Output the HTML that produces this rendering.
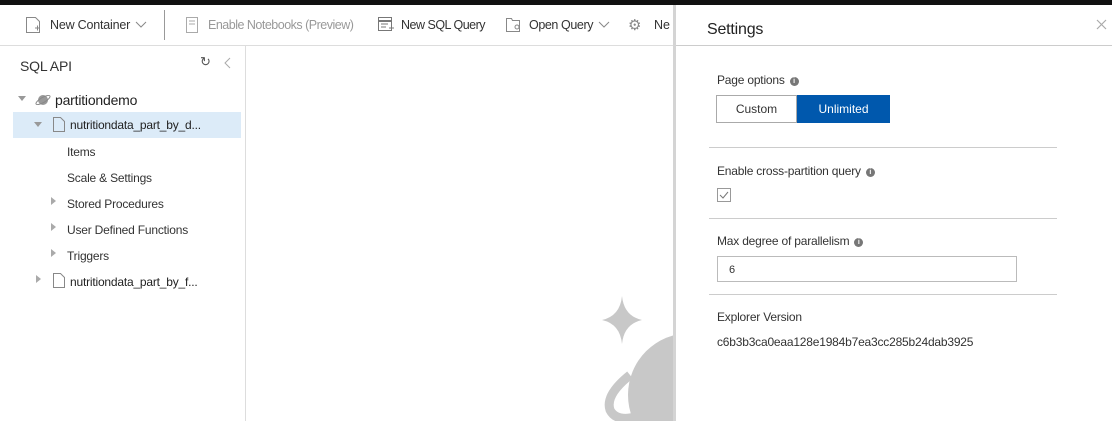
<!DOCTYPE html>
<html><head><style>
*{margin:0;padding:0;box-sizing:border-box}
body{width:1112px;height:421px;overflow:hidden;background:#fff;font-family:"Liberation Sans",sans-serif;font-size:12px;color:#333;position:relative}
.a{position:absolute;white-space:nowrap}
.s{letter-spacing:-0.2px}
.info{display:inline-block;width:9px;height:9px;border-radius:50%;background:#777;color:#fff;font-size:7px;text-align:center;line-height:9px;font-weight:bold;vertical-align:1px;margin-left:5px;letter-spacing:0}
.hl{position:absolute;height:1px;background:#ccc}
.tri{position:absolute;width:0;height:0}
</style></head><body>
<div class="a" style="left:0;top:0;width:1112px;height:5px;background:#111"></div>
<div class="hl" style="left:0;top:45px;width:675px;background:#ddd"></div>
<div class="a" style="left:164px;top:10px;width:1px;height:30px;background:#999"></div>
<!-- toolbar -->
<svg class="a" style="left:25px;top:16px" width="16" height="18"><path d="M1.5 1.5h9l4 4v11h-13z" fill="none" stroke="#888"/><path d="M10 12h5M12.5 9.5v5" stroke="#888"/></svg>
<div class="a s" style="left:50px;top:18px;font-size:12.5px;color:#333">New Container</div>
<svg class="a" style="left:135px;top:21px" width="12" height="8"><path d="M1 1l5 5 5-5" fill="none" stroke="#888"/></svg>
<svg class="a" style="left:185px;top:16px" width="14" height="18"><rect x="1.5" y="1.5" width="11" height="15" fill="none" stroke="#aaa"/><path d="M4 5h6M4 8h6" stroke="#aaa"/></svg>
<div class="a s" style="left:208px;top:18px;font-size:12.5px;color:#999;letter-spacing:-0.5px">Enable Notebooks (Preview)</div>
<svg class="a" style="left:377px;top:16px" width="17" height="17"><rect x="1.5" y="1.5" width="13" height="13" fill="none" stroke="#777"/><path d="M1.5 5h13" stroke="#777" stroke-width="2"/><path d="M4 8h7M4 11h5M12 12h5M14.5 9.5v5" stroke="#777"/></svg>
<div class="a s" style="left:401px;top:18px;font-size:12.5px;letter-spacing:-0.5px">New SQL Query</div>
<svg class="a" style="left:505px;top:17px" width="17" height="16"><path d="M1.5 14.5v-13h5l1 2h7v11z" fill="none" stroke="#888"/><circle cx="12" cy="10" r="2" fill="none" stroke="#888"/></svg>
<div class="a s" style="left:529px;top:18px;font-size:12.5px;letter-spacing:-0.4px">Open Query</div>
<svg class="a" style="left:598px;top:21px" width="12" height="8"><path d="M1 1l5 5 5-5" fill="none" stroke="#888"/></svg>
<div class="a" style="left:628px;top:16px;color:#888;font-size:15px">⚙</div>
<div class="a" style="left:654px;top:18px;font-size:12.5px">Ne</div>
<!-- sidebar -->
<div class="a" style="left:245px;top:45px;width:1px;height:376px;background:#ddd"></div>
<div class="a s" style="left:20px;top:58px;font-size:14px;color:#333">SQL API</div>
<div class="a" style="left:200px;top:54px;font-size:13px;color:#555">↻</div>
<svg class="a" style="left:224px;top:57px" width="8" height="12"><path d="M6 1L1 6l5 5" fill="none" stroke="#aaa"/></svg>
<div class="tri" style="left:18px;top:96px;border-left:4px solid transparent;border-right:4px solid transparent;border-top:5px solid #999"></div>
<svg class="a" style="left:34px;top:91px" width="18" height="16"><circle cx="9" cy="9" r="5" fill="#999"/><ellipse cx="9" cy="9" rx="8" ry="2.5" fill="none" stroke="#888" transform="rotate(-30 9 9)"/></svg>
<div class="a s" style="left:55px;top:92px;font-size:14px;color:#222">partitiondemo</div>
<div class="a" style="left:13px;top:112px;width:228px;height:26px;background:#dcebf8"></div>
<div class="tri" style="left:34px;top:122px;border-left:4px solid transparent;border-right:4px solid transparent;border-top:5px solid #999"></div>
<svg class="a" style="left:52px;top:116px" width="14" height="17"><path d="M1.5 1.5h7l4 4v10h-11z" fill="none" stroke="#888"/></svg>
<div class="a s" style="left:70px;top:118px;color:#222">nutritiondata_part_by_d...</div>
<div class="a s" style="left:67px;top:145px">Items</div>
<div class="a s" style="left:67px;top:171px">Scale &amp; Settings</div>
<div class="tri" style="left:51px;top:197px;border-top:4px solid transparent;border-bottom:4px solid transparent;border-left:5px solid #aaa"></div>
<div class="a s" style="left:67px;top:197px">Stored Procedures</div>
<div class="tri" style="left:51px;top:223px;border-top:4px solid transparent;border-bottom:4px solid transparent;border-left:5px solid #aaa"></div>
<div class="a s" style="left:67px;top:223px">User Defined Functions</div>
<div class="tri" style="left:51px;top:249px;border-top:4px solid transparent;border-bottom:4px solid transparent;border-left:5px solid #aaa"></div>
<div class="a s" style="left:67px;top:249px">Triggers</div>
<div class="tri" style="left:36px;top:275px;border-top:4px solid transparent;border-bottom:4px solid transparent;border-left:5px solid #aaa"></div>
<svg class="a" style="left:52px;top:272px" width="14" height="17"><path d="M1.5 1.5h7l4 4v10h-11z" fill="none" stroke="#888"/></svg>
<div class="a s" style="left:70px;top:275px;color:#222">nutritiondata_part_by_f...</div>
<!-- background logo -->
<svg class="a" style="left:590px;top:290px" width="90" height="131"><path d="M32 6 Q34 26 52 30 Q34 34 32 54 Q30 34 12 30 Q30 26 32 6z" fill="#c8c8c8"/><circle cx="100" cy="105" r="62" fill="#c8c8c8"/><path d="M80 112 Q30 140 20 120 Q15 105 40 85" fill="none" stroke="#c8c8c8" stroke-width="9"/></svg>
<!-- panel -->
<div class="a" style="left:673px;top:5px;width:3px;height:416px;background:#d4d4d4"></div>
<div class="a" style="left:676px;top:5px;width:436px;height:416px;background:#fff"></div>
<div class="a s" style="left:707px;top:21px;font-size:16px;color:#222">Settings</div>
<svg class="a" style="left:1096px;top:19px" width="11" height="11"><path d="M1 1l9 9M10 1l-9 9" stroke="#aaa" stroke-width="1.2"/></svg>
<div class="hl" style="left:676px;top:45px;width:436px"></div>
<div class="a s" style="left:717px;top:73px">Page options<span class="info">i</span></div>
<div class="a" style="left:716px;top:95px;width:81px;height:28px;border:1px solid #aaa;text-align:center;line-height:26px">Custom</div>
<div class="a" style="left:797px;top:95px;width:93px;height:28px;background:#0058ad;color:#fff;text-align:center;line-height:28px">Unlimited</div>
<div class="hl" style="left:709px;top:147px;width:348px"></div>
<div class="a s" style="left:717px;top:164px">Enable cross-partition query<span class="info">i</span></div>
<svg class="a" style="left:717px;top:188px" width="14" height="14"><rect x="0.5" y="0.5" width="13" height="13" fill="#fff" stroke="#999"/><path d="M3 7l3 3 5-6" fill="none" stroke="#777"/></svg>
<div class="hl" style="left:709px;top:218px;width:348px"></div>
<div class="a s" style="left:717px;top:234px">Max degree of parallelism<span class="info">i</span></div>
<div class="a" style="left:717px;top:256px;width:300px;height:26px;border:1px solid #bbb;padding-left:11px;line-height:26px;font-size:11px">6</div>
<div class="hl" style="left:709px;top:294px;width:348px"></div>
<div class="a s" style="left:717px;top:310px">Explorer Version</div>
<div class="a s" style="left:717px;top:335px">c6b3b3ca0eaa128e1984b7ea3cc285b24dab3925</div>
</body></html>
